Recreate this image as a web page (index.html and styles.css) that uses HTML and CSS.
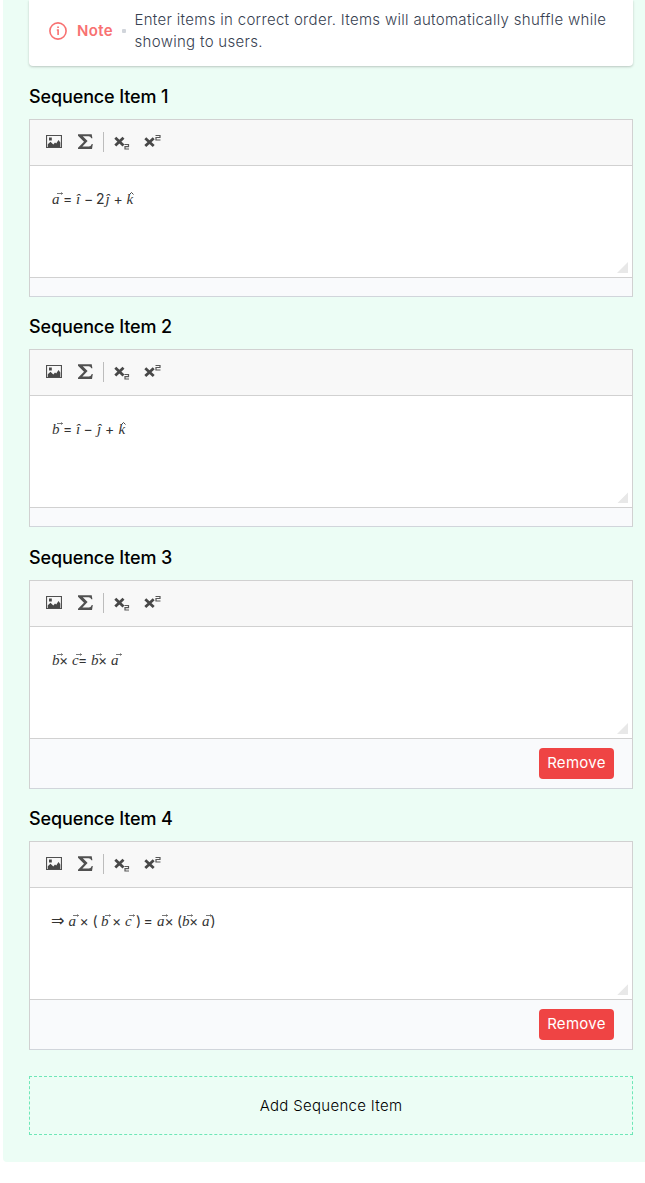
FILE: index.html
```html
<!DOCTYPE html>
<html lang="en">
<head>
<meta charset="utf-8">
<title>Sequence Items</title>
<link rel="stylesheet" href="styles.css">
</head>
<body>
<svg class="defs" aria-hidden="true">
  <symbol id="tools" viewBox="0 0 120 20">
    <path fill="#505050" fill-rule="evenodd" d="M0 3h16v13H0zM1.100 4.100v10.800h13.800V4.100z"/>
    <path fill="#484848" d="M1.800 15v-2.800L4.500 9.800l2.800 2.700L9 10.500l1.200 1L12.500 8l1.800 2.500V15zM3 5.600h2.800v2.800H3z"/>
    <path fill="#505050" d="M32 2.200h13.700l.7 4h-1.100q-.7-2-2.700-2h-5.800l4.800 4.800-5.200 5.400h6.400q2 0 3-2.500h1L46 17H32v-1.300l6-6-6-6z"/>
    <path stroke="#bcbcbc" d="M57.500 0v20"/>
    <path stroke="#484848" stroke-width="2.800" d="m69.300 5.700 8.200 7.800m0-7.800-8.200 7.800M99.300 6.200l8.400 7.800m0-7.800-8.400 7.800"/>
    <path fill="none" stroke="#585858" stroke-width="1.200" d="M78.500 12.500h4v2.200H79v2.300H83M109.500 3.500h4.500v2H110v2.500H114.500"/>
  </symbol>
  <symbol id="vec" viewBox="0 0 6 4"><path fill="none" stroke="#555" stroke-width=".8" d="M0 1.500h5.500M4.200.5 5.500 1.500 4.200 2.500"/></symbol>
</svg>
<main class="panel">
  <section class="note">
    <svg class="info" viewBox="0 0 18 18"><circle cx="9" cy="9" r="8.100"/><path d="M7.800 8H9.100v5M8.200 5.300h1.700"/></svg>
    <strong class="note-label">Note</strong>
    <i class="dot"></i>
    <p class="note-text">Enter items in correct order. Items will automatically shuffle while showing to users.</p>
  </section>

  <section class="item">
    <h2 class="title">Sequence Item 1</h2>
    <div class="editor">
      <div class="toolbar"><svg class="tools"><use href="#tools"/></svg></div>
      <div class="content">
        <svg class="formula" viewBox="0 0 200 24">
          <text y="18"><tspan class="v" x="0">a</tspan><tspan x="11">=</tspan><tspan class="v" x="24">î</tspan><tspan x="32">−</tspan><tspan x="44">2</tspan><tspan class="v" x="53.500">ĵ</tspan><tspan x="61.500">+</tspan><tspan class="v" x="74.500">k</tspan></text>
          <path class="hat" d="m77.500 8.500 2-2 2 2"/>
          <use href="#vec" x="5" y="6" width="6" height="4"/>
        </svg>
        <i class="grip"></i>
      </div>
      <div class="footer"></div>
    </div>
  </section>

  <section class="item">
    <h2 class="title">Sequence Item 2</h2>
    <div class="editor">
      <div class="toolbar"><svg class="tools"><use href="#tools"/></svg></div>
      <div class="content">
        <svg class="formula" viewBox="0 0 200 24">
          <text y="18"><tspan class="v" x="0">b</tspan><tspan x="11">=</tspan><tspan class="v" x="24">î</tspan><tspan x="31.500">−</tspan><tspan class="v" x="45">ĵ</tspan><tspan x="53">+</tspan><tspan class="v" x="66.500">k</tspan></text>
          <path class="hat" d="m69.500 8.500 2-2 2 2"/>
          <use href="#vec" x="5" y="6" width="6" height="4"/>
        </svg>
        <i class="grip"></i>
      </div>
      <div class="footer"></div>
    </div>
  </section>

  <section class="item">
    <h2 class="title">Sequence Item 3</h2>
    <div class="editor removable">
      <div class="toolbar"><svg class="tools"><use href="#tools"/></svg></div>
      <div class="content">
        <svg class="formula" viewBox="0 0 200 24">
          <text y="18"><tspan class="v" x="0">b</tspan><tspan x="7">×</tspan><tspan class="v" x="20">c</tspan><tspan x="26">=</tspan><tspan class="v" x="39">b</tspan><tspan x="46">×</tspan><tspan class="v" x="59">a</tspan></text>
          <use href="#vec" x="5" y="6" width="6" height="4"/><use href="#vec" x="24" y="6" width="6" height="4"/><use href="#vec" x="44" y="6" width="6" height="4"/><use href="#vec" x="64" y="6" width="6" height="4"/>
        </svg>
        <i class="grip"></i>
      </div>
      <div class="footer"><button class="remove">Remove</button></div>
    </div>
  </section>

  <section class="item">
    <h2 class="title">Sequence Item 4</h2>
    <div class="editor removable">
      <div class="toolbar"><svg class="tools"><use href="#tools"/></svg></div>
      <div class="content">
        <svg class="formula" viewBox="0 0 200 24">
          <text y="18"><tspan class="arrow" x="-1">⇒</tspan><tspan class="v" x="16.500">a</tspan><tspan x="27.500">×</tspan><tspan x="40.500">(</tspan><tspan class="v" x="49">b</tspan><tspan x="60">×</tspan><tspan class="v" x="73">c</tspan><tspan x="84">)</tspan><tspan x="91.500">=</tspan><tspan class="v" x="105">a</tspan><tspan x="112.500">×</tspan><tspan x="125">(</tspan><tspan class="v" x="130">b</tspan><tspan x="137">×</tspan><tspan class="v" x="150">a</tspan><tspan x="158.500">)</tspan></text>
          <use href="#vec" x="21" y="6" width="6" height="4"/><use href="#vec" x="53" y="6" width="6" height="4"/><use href="#vec" x="77" y="6" width="6" height="4"/><use href="#vec" x="110" y="6" width="6" height="4"/><use href="#vec" x="135" y="6" width="6" height="4"/><use href="#vec" x="154" y="6" width="6" height="4"/>
        </svg>
        <i class="grip"></i>
      </div>
      <div class="footer"><button class="remove">Remove</button></div>
    </div>
  </section>

  <button class="add">Add Sequence Item</button>
</main>
</body>
</html>
```
FILE: styles.css
```css
* { box-sizing: border-box; }
body { margin: 0; background: #fff; font-family: Inter, sans-serif; color: #000; }
.defs { display: none; }
.panel { margin-left: 3px; height: 1161.5px; padding: 0 12px 0 26px; background: #ecfdf5; border-radius: 0 0 0 4px; }
.note { height: 66.3px; display: flex; align-items: center; padding: 0 20px 5px; background: #fff; border-radius: 0 0 4px 4px; box-shadow: 0 1px 3px rgba(0,0,0,.12), 0 1px 2px rgba(0,0,0,.1); }
.info { width: 18px; height: 18px; flex: none; fill: none; stroke: #f87171; stroke-width: 1.6; }
.note-label { margin-left: 10px; width: 36px; font-size: 15px; font-weight: 600; letter-spacing: .4px; color: #f87171; }
.dot { width: 4px; height: 4px; margin: 0 8.5px 0 9px; flex: none; background: #d1d5db; border-radius: 1px; }
.note-text { margin: 0; flex: 1; font-size: 15px; font-weight: 300; line-height: 22px; letter-spacing: .31px; color: #374151; }
.title { margin: 0; height: 52.7px; padding-top: 16.7px; font-size: 18px; line-height: 28px; font-weight: 500; letter-spacing: -.12px; }
.editor { height: 177.8px; display: flex; flex-direction: column; border: 1px solid #d1d1d1; border-bottom-color: #d1d5db; background: #f9fafc; }
.editor.removable { height: 208.6px; }
.toolbar { height: 46px; flex: none; padding: 12px 16px; background: #f8f8f8; border-bottom: 1px solid #d1d1d1; }
.tools { display: block; width: 120px; height: 20px; }
.content { height: 112px; flex: none; display: flex; justify-content: space-between; align-items: flex-end; padding: 20px 4px 4px 22px; background: #fff; border-bottom: 1px solid #d1d1d1; }
.formula { align-self: flex-start; width: 200px; height: 24px; overflow: visible; font: 14px Inter, sans-serif; fill: #333; }
.v { font: italic 15px "Liberation Serif", serif; }
.hat { fill: none; stroke: #333; stroke-width: .9; }
.arrow { font: 16px "DejaVu Sans", sans-serif; }
.grip { width: 11px; height: 11px; background: #e8e8e8; clip-path: polygon(100% 0, 100% 100%, 0 100%); }
.footer { flex: 1; display: flex; justify-content: flex-end; padding: 9px 18px 0 0; }
.remove { width: 75px; height: 31px; padding: 0 0 2px; border: 0; border-radius: 4px; background: #ef4444; color: #fff; font: 15px/29px Inter, sans-serif; letter-spacing: .3px; }
.add { display: block; width: 100%; height: 59px; margin-top: 26px; padding: 0; border: 1px dashed #6ee7b7; background: transparent; color: #000; font: 300 15px Inter, sans-serif; letter-spacing: .3px; }
```
